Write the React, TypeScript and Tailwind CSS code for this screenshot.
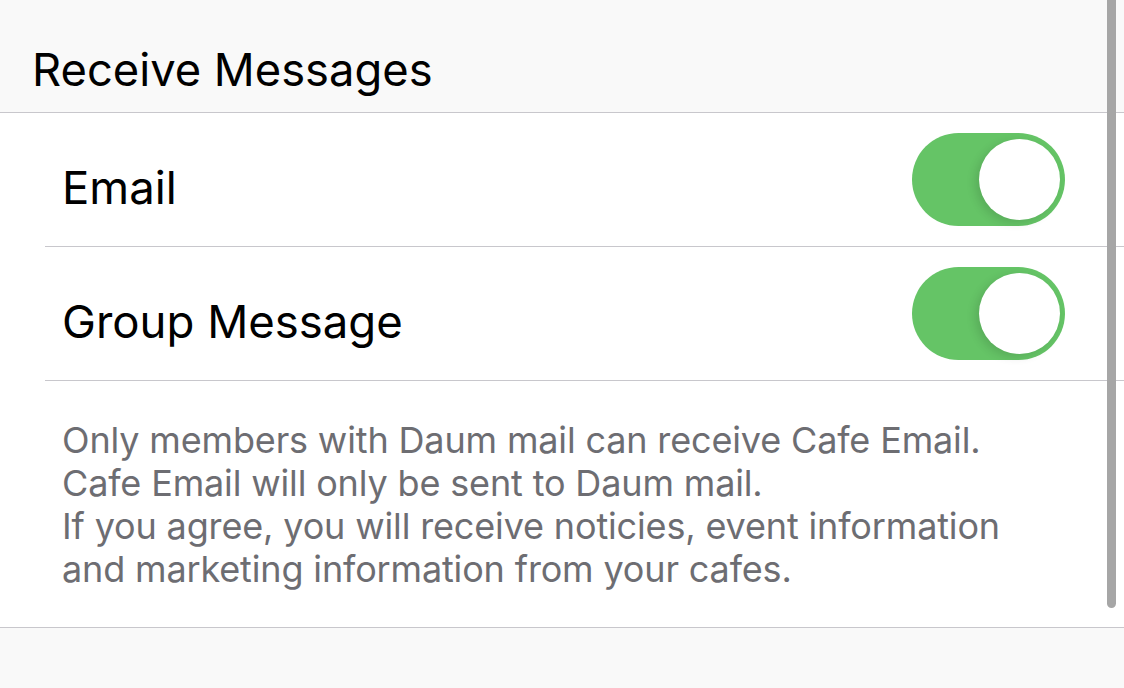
import React from 'react';

function Toggle() {
  return (
    <div className="relative w-[153px] h-[93px] rounded-full bg-[#65c466] shrink-0">
      <div className="absolute right-[5px] top-[6px] w-[81px] h-[81px] rounded-full bg-white shadow-[-4px_3px_10px_rgba(0,0,0,0.12)]" />
    </div>
  );
}

function Row({ label }: { label: string }) {
  return (
    <div className="pl-[45px]">
      <div className="flex items-center justify-between h-[134px] pl-[17px] pr-[59px] border-b border-[#c8c7cc]">
        <span className="text-[45.5px] leading-none pt-[17px] text-black">{label}</span>
        <Toggle />
      </div>
    </div>
  );
}

export default function App() {
  return (
    <div
      className="relative w-[1124px] h-[688px] overflow-hidden bg-[#f9f9f9]"
      style={{ fontFamily: 'Inter, "Noto Sans", sans-serif' }}
    >
      <div className="h-[113px] flex items-end pl-[32px] pb-[20px] border-b border-[#c8c7cc]">
        <h1 className="text-[45.3px] leading-none font-normal text-black">Receive Messages</h1>
      </div>

      <div className="bg-white border-b border-[#c8c7cc]">
        <Row label="Email" />
        <Row label="Group Message" />
        <div className="h-[246px] pl-[62px] pr-[40px] pt-[38px] text-[36px] tracking-[-0.15px] leading-[43px] text-[#6d6d72]">
          <p>Only members with Daum mail can receive Cafe Email.</p>
          <p>Cafe Email will only be sent to Daum mail.</p>
          <p>If you agree, you will receive noticies, event information</p>
          <p>and marketing information from your cafes.</p>
        </div>
      </div>

      <div className="absolute top-0 left-[1107px] w-[9px] h-[608px] rounded-b-full bg-[#a6a6a6]" />
    </div>
  );
}
